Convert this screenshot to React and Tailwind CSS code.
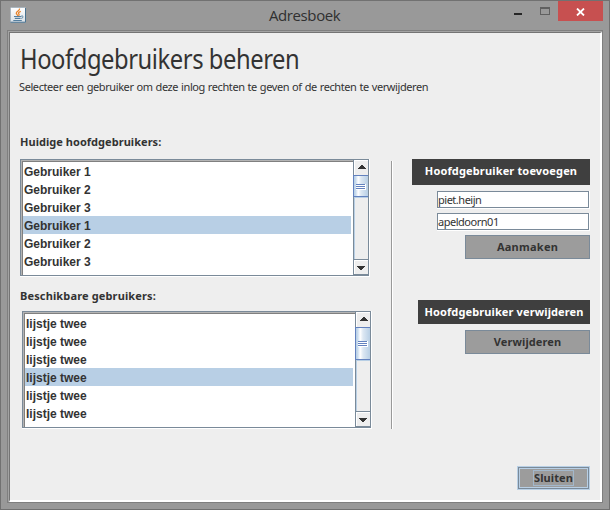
import React from "react";

const UI = "font-['Noto_Sans',sans-serif]";

function JavaIcon() {
  return (
    <svg width="16" height="16" viewBox="0 0 16 16" className="block">
      <defs>
        <linearGradient id="jg" x1="0" y1="0" x2="0" y2="1">
          <stop offset="0" stopColor="#ffffff" />
          <stop offset="1" stopColor="#d9e0e6" />
        </linearGradient>
      </defs>
      <rect x="0.5" y="0.5" width="15" height="15" rx="1" fill="url(#jg)" stroke="#a9b6c0" />
      <path d="M0.5 15.2H15.5V1" fill="none" stroke="#4a7390" strokeWidth="1" />
      <path d="M9.5 1.5C10 4 6 4.500 6.300 6.300C6.500 7.300 8 7.800 7.600 9M10.800 4.300C8.500 5 8 6.200 9 7.200C9.400 7.800 9 8.400 8.500 8.800" fill="none" stroke="#e8842c" strokeWidth="1.3" />
      <path d="M4 9.500H11.300M4.800 11.300H10.600M3.300 13.500H11.800" fill="none" stroke="#557f9f" strokeWidth="1.2" />
      <path d="M11.300 9C13.800 8.500 13.500 11 11.300 11.400" fill="none" stroke="#557f9f" />
    </svg>
  );
}

function Arrow({ down }) {
  return (
    <svg width="8" height="4" viewBox="0 0 8 4" shapeRendering="crispEdges" className="block" fill="#333">
      {[0, 1, 2, 3].map((i) => (
        <rect key={i} x={3 - i} y={down ? 3 - i : i} width={2 + 2 * i} height="1" />
      ))}
    </svg>
  );
}

function ScrollBar({ thumb }) {
  return (
    <div className="flex w-[16px] flex-col border-x border-[#7a8a99] bg-[#eee]">
      <div className="flex h-[15px] shrink-0 justify-center border-l border-t border-white pt-[4px]">
        <Arrow />
      </div>
      <div className="flex grow flex-col border-l border-[#b8cfe5]">
        <div
          className={
            "-ml-[2px] flex shrink-0 flex-col items-center border-y border-l border-[#6382bf] bg-[linear-gradient(90deg,#b8cfe5_0%,#c8dbee_12%,#ffffff_30%,#dde8f3_50%,#b8cfe5_100%)] " +
            thumb
          }
        >
          <div className="flex h-[6px] w-[10px] flex-col">
            <i className="block h-[2px] border-b border-r border-white bg-[#6382bf]" />
            <i className="block h-[2px] border-b border-r border-white bg-[#6382bf]" />
            <i className="block h-[2px] border-b border-r border-white bg-[#6382bf]" />
          </div>
        </div>
        <div className="h-px bg-[#b8cfe5]" />
      </div>
      <div className="flex h-[16px] shrink-0 justify-center border-y border-[#7a8a99] pt-[6px] shadow-[inset_1px_1px_white]">
        <Arrow down />
      </div>
    </div>
  );
}

function List({ items, selected, thumb }) {
  return (
    <div className="flex h-[118px] w-[350px] border-b border-r border-white">
      <div className="flex h-[117px] w-[349px] border-y border-l border-[#7a8a99]">
        <div className="flex grow border-l border-t border-[#b4b4b4]">
          <div className="grow border-l border-t border-[#808080] bg-white">
            {items.map((t, i) => (
              <div
                key={i}
                className={
                  "mr-[2px] h-[18px] whitespace-nowrap pl-px pt-px font-['Liberation_Sans',Arial,sans-serif] text-[12px] font-bold leading-[19px] text-[#333] " +
                  (i === selected ? "bg-[#b8cfe5]" : "")
                }
              >
                {t}
              </div>
            ))}
          </div>
        </div>
        <ScrollBar thumb={thumb} />
      </div>
    </div>
  );
}

function Field({ children }) {
  return (
    <div className="h-[18px] w-[153px] border-b border-r border-white">
      <div className="h-[17px] border border-[#7a8a99] bg-white">
        <span className="block whitespace-nowrap text-[11px] leading-[16px] tracking-[-0.48px] text-[#333]">{children}</span>
      </div>
    </div>
  );
}

function Button({ children, text }) {
  return (
    <button className="flex h-[24px] w-[125px] items-center justify-center border border-[#7a8a99] bg-[#9c9c9c]">
      <span className={"whitespace-nowrap text-[11px] font-bold leading-[16px] text-[#333] " + text}>{children}</span>
    </button>
  );
}

export default function App() {
  return (
    <div className={"flex h-[510px] w-[610px] flex-col overflow-hidden border border-[#717171] bg-[#999] text-[#333] " + UI}>
      <header className="flex h-[29px] shrink-0">
        <div className="w-[200px] pl-[9px] pt-[6px]">
          <JavaIcon />
        </div>
        <div className="grow pl-[68px] pt-[4px] font-['Open_Sans',sans-serif] text-[15px] leading-[20px] text-[#303030]">
          <span className="whitespace-nowrap tracking-[-0.4px]">Adresboek</span>
        </div>
        <div className="flex pr-[6px]">
          <div className="mr-[18px] mt-[12px] h-[2px] w-[8px] bg-[#262626]" />
          <div className="mr-[8px] mt-[6px] h-[8px] w-[10px] border border-t-2 border-[#606060]" />
          <div className="flex h-[20px] w-[45px] items-center justify-center bg-[#c75050]">
            <svg width="9" height="8" viewBox="0 0 9 8" className="mt-[1px]">
              <path d="M1 0.500L8 7.500M8 0.500L1 7.500" stroke="white" strokeWidth="1.800" />
            </svg>
          </div>
        </div>
      </header>
      <div className="ml-[6px] h-[473px] w-[596px] border border-[#7f7f7f] bg-[#a3a3a3] pl-px pt-px">
        <main className="flex h-[470px] flex-col border-b-2 border-l border-r-2 border-t border-b-white border-l-[#747474] border-r-white border-t-[#747474] bg-[#eee]">
          <h1 className="h-[46px] w-[400px] pl-[10px] pt-[7px] text-[27px] leading-[38px]">
            <span className="inline-block origin-left scale-x-[0.88] whitespace-nowrap tracking-[-0.5px]">Hoofdgebruikers beheren</span>
          </h1>
          <p className="h-[50px] whitespace-nowrap pl-[9px] text-[11px] leading-[16px]">
            <span className="tracking-[-0.41px] [word-spacing:0.5px]">Selecteer een gebruiker om deze inlog rechten te geven of de rechten te verwijderen</span>
          </p>
          <div className="flex h-[299px]">
            <section className="w-[381px] pl-[10px] pt-[5px]">
              <h2 className="h-[16px] whitespace-nowrap text-[11px] font-bold leading-[16px] tracking-[0.04px]">
                Huidige hoofdgebruikers:
              </h2>
              <div className="mt-[9px]">
                <List
                  items={["Gebruiker 1", "Gebruiker 2", "Gebruiker 3", "Gebruiker 1", "Gebruiker 2", "Gebruiker 3"]}
                  selected={3}
                  thumb="h-[22px] pt-[8px]"
                />
              </div>
              <h2 className="mb-[7px] mt-[11px] h-[16px] whitespace-nowrap text-[11px] font-bold leading-[16px] tracking-[0.14px]">
                Beschikbare gebruikers:
              </h2>
              <div className="pl-[2px]">
                <List items={Array(6).fill("lijstje twee")} selected={3} thumb="h-[33px] pt-[13px]" />
              </div>
            </section>
            <div className="mt-[32px] h-[268px] w-[2px] border-l border-r border-l-[#999] border-r-white" />
            <aside className="flex w-[197px] flex-col items-end pt-[30px]">
              <h3 className="flex h-[26px] w-[178px] items-center justify-center whitespace-nowrap bg-[#3f3f3f] pb-px text-[11px] font-bold tracking-[0.15px] text-white">
                Hoofdgebruiker toevoegen
              </h3>
              <div className="mt-[6px]"><Field>piet.heijn</Field></div>
              <div className="mt-[4px]"><Field>apeldoorn01</Field></div>
              <div className="mt-[4px]"><Button text="tracking-[0.25px]">Aanmaken</Button></div>
              <h3 className="mt-[41px] flex h-[24px] w-[172px] items-center justify-center whitespace-nowrap bg-[#3f3f3f] text-[11px] font-bold tracking-[0.12px] text-white">
                Hoofdgebruiker verwijderen
              </h3>
              <div className="mt-[6px]"><Button text="tracking-[0.1px]">Verwijderen</Button></div>
            </aside>
          </div>
          <footer className="flex justify-end pr-[10px] pt-[38px]">
            <button className="h-[24px] w-[73px] border border-[#b8cfe5] bg-[#9c9c9c]">
              <span className="flex h-[22px] items-center justify-center border border-[#7a8a99] shadow-[inset_0_0_0_1px_#b8cfe5]">
                <span className="flex h-[16px] w-[41px] items-center justify-center border border-[#a3b8cc] text-[11px] font-bold leading-[14px] tracking-[0.1px] text-[#333]">
                  Sluiten
                </span>
              </span>
            </button>
          </footer>
        </main>
      </div>
    </div>
  );
}
